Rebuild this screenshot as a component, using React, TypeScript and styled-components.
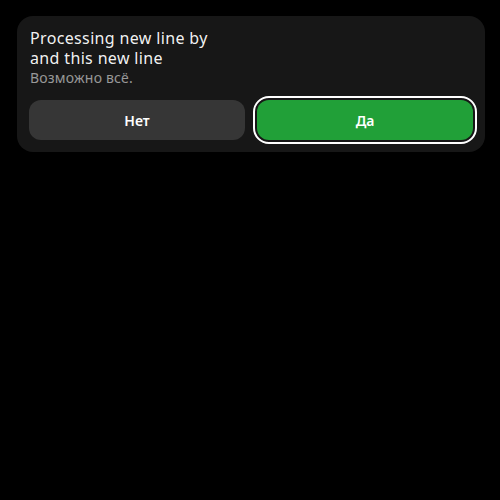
import styled, { createGlobalStyle } from 'styled-components';

const GlobalStyle = createGlobalStyle`
  html, body {
    margin: 0;
    padding: 0;
    background: #000;
    height: 100%;
  }
  body {
    font-family: 'Noto Sans', 'Open Sans', sans-serif;
    -webkit-font-smoothing: antialiased;
  }
`;

const Page = styled.div({
  padding: '16px 15px 0 17px'
});

const Card = styled.div({
  backgroundColor: '#171717',
  borderRadius: '16px',
  padding: '12px',
  display: 'flex',
  flexDirection: 'column'
});

const Title = styled.div({
  color: 'rgba(255, 255, 255, 0.96)',
  fontSize: '16px',
  lineHeight: '20px',
  letterSpacing: '0.35px',
  paddingLeft: '1px'
});

const Subtitle = styled.div({
  color: 'rgba(255, 255, 255, 0.56)',
  fontSize: '14px',
  lineHeight: '20px',
  letterSpacing: '0.2px',
  paddingLeft: '1px'
});

const Actions = styled.div({
  display: 'grid',
  gridTemplateColumns: '1fr 1fr',
  gap: '12px',
  marginTop: '12px'
});

const Button = styled.button<{ $primary?: boolean; $focused?: boolean }>`
  height: 40px;
  border: none;
  border-radius: 12px;
  font-family: inherit;
  font-size: 14px;
  font-weight: 600;
  color: #fff;
  cursor: pointer;
  background-color: ${(p) => (p.$primary ? '#21a038' : '#363636')};
  outline: ${(p) => (p.$focused ? '2px solid #fff' : 'none')};
  outline-offset: 2px;
`;

export default function App() {
  return (
    <>
      <GlobalStyle />
      <Page>
        <Card>
          <Title>
            Processing new line by
            <br />
            and this new line
          </Title>
          <Subtitle>Возможно всё.</Subtitle>
          <Actions>
            <Button>Нет</Button>
            <Button $primary $focused>
              Да
            </Button>
          </Actions>
        </Card>
      </Page>
    </>
  );
}
